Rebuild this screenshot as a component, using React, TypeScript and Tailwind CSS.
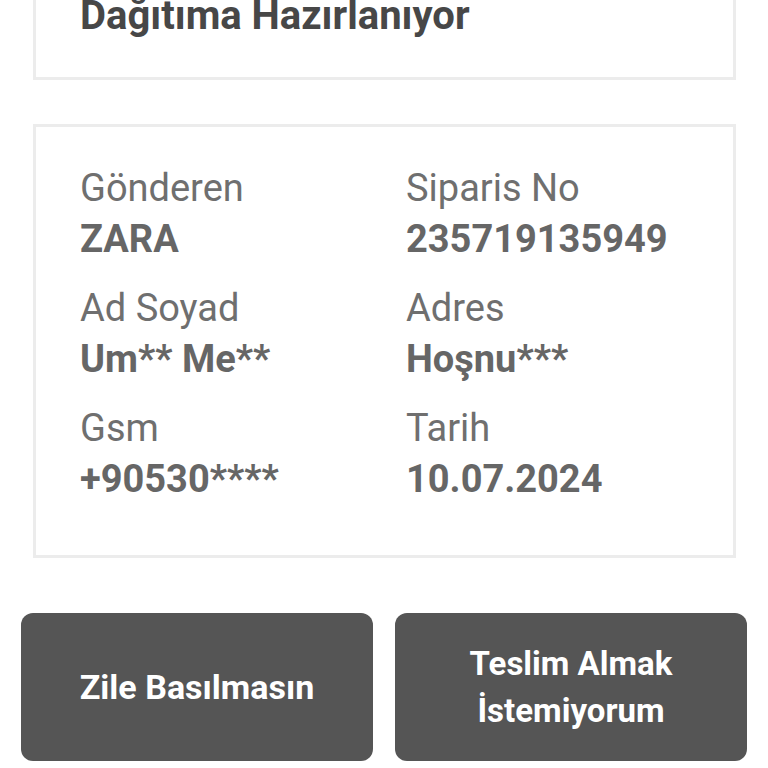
import React from 'react';

const rows = [
    [
        { label: 'Gönderen', value: 'ZARA' },
        { label: 'Siparis No', value: '235719135949' },
    ],
    [
        { label: 'Ad Soyad', value: 'Um** Me**' },
        { label: 'Adres', value: 'Hoşnu***' },
    ],
    [
        { label: 'Gsm', value: '+90530****' },
        { label: 'Tarih', value: '10.07.2024' },
    ],
];

const App = () => {
    return (
        <div className="w-[768px] h-[768px] overflow-hidden bg-white font-['Roboto',sans-serif]">
            <div className="mx-[33px] mr-[32px] -mt-[40px] pt-[29px] pb-[38px] pl-[44px] border-[3px] border-[#ececec] bg-white">
                <h1 className="whitespace-nowrap text-[40px] leading-[47px] font-bold text-[#474747]">
                    Dağıtıma Hazırlanıyor
                </h1>
            </div>

            <div className="mx-[33px] mr-[32px] mt-[44px] pt-[36px] pb-[50px] pl-[44px] border-[3px] border-[#ececec] bg-white">
                <div className="grid grid-cols-[326px_1fr] gap-y-[18px]">
                    {rows.flat().map((item) => (
                        <div key={item.label} className="flex flex-col text-[38px] leading-[51px] whitespace-nowrap">
                            <span className="text-[#6f6f6f]">{item.label}</span>
                            <span className="font-bold text-[#666666]">{item.value}</span>
                        </div>
                    ))}
                </div>
            </div>

            <div className="mt-[55px] px-[21px] grid grid-cols-2 gap-[22px]">
                <button className="h-[148px] rounded-[12px] bg-[#555555] flex items-center justify-center">
                    <span className="text-[34px] leading-[47px] font-bold text-white whitespace-nowrap">
                        Zile Basılmasın
                    </span>
                </button>
                <button className="h-[148px] rounded-[12px] bg-[#555555] flex items-center justify-center">
                    <span className="text-[33px] leading-[47px] font-bold text-white text-center whitespace-nowrap">
                        Teslim Almak
                        <br />
                        İstemiyorum
                    </span>
                </button>
            </div>
        </div>
    );
};

export default App;
